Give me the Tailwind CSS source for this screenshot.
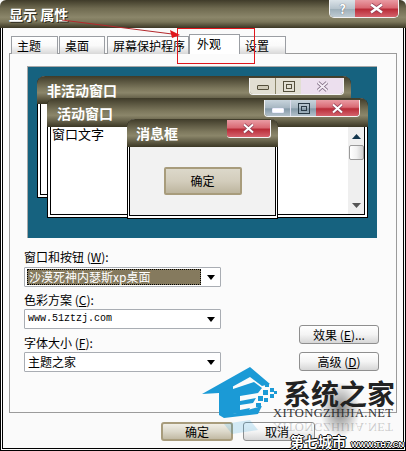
<!DOCTYPE html>
<html lang="zh">
<head>
<meta charset="utf-8">
<script src="https://cdn.jsdelivr.net/npm/@tailwindcss/browser@4"></script>
<title>显示 属性</title>
</head>
<body class="bg-white">
<div class="relative flex h-[451px] w-[406px] flex-col overflow-hidden bg-[#fafafa] font-['Noto_Sans_CJK_SC',sans-serif] text-[12px] leading-[14px] text-black">

  <!-- title bar -->
  <div class="relative flex h-[28px] shrink-0 items-center rounded-t-[6px] bg-[linear-gradient(180deg,#3f3b29_0%,#6f6a50_30%,#8b866a_62%,#7a7559_78%,#3b3725_100%)] pl-[9px]">
    <span class="text-[14px] font-bold text-white [text-shadow:1px_1px_0_#2c2a1c]">显示 属性</span>
    <div class="absolute right-[7px] top-0 flex h-[18px] overflow-hidden rounded-b-[5px] border border-t-0 border-[#f2f2f2]">
      <div class="flex w-[25px] items-center justify-center bg-[linear-gradient(180deg,#dbe3e8,#b7c4cd_50%,#9fb0ba_55%,#bfcbd3)] text-[13px] font-bold leading-[14px] text-white [text-shadow:0_0_1px_#334]">?</div>
      <div class="flex w-[43px] items-center justify-center bg-[linear-gradient(180deg,#e99ba3,#d96a74_45%,#b92c38_55%,#d5636d)]">
        <svg width="15" height="11" viewBox="0 0 15 11"><path d="M2 1.5 13 9.5M13 1.5 2 9.5" stroke="#8f3f55" stroke-width="4"/><path d="M2 1.5 13 9.5M13 1.5 2 9.5" stroke="#fff" stroke-width="2.4"/></svg>
      </div>
    </div>
  </div>

  <!-- window frame and client area -->
  <div class="flex min-h-0 flex-1 flex-col border-[3px] border-t-0 border-double border-black px-[6px] pt-[6px]">
    <!-- tabs -->
    <div class="relative z-10 -mb-px flex h-[20px] shrink-0 items-end pl-[2px]">
      <div class="mr-px flex h-[18px] w-[47px] items-center border border-b-0 border-[#9b9ea3] bg-[linear-gradient(180deg,#fff,#fafafa_50%,#d8d8d8)] pl-[5px]">主题</div>
      <div class="mr-[2px] flex h-[18px] w-[46px] items-center border border-b-0 border-[#9b9ea3] bg-[linear-gradient(180deg,#fff,#fafafa_50%,#d8d8d8)] pl-[5px]">桌面</div>
      <div class="flex h-[18px] w-[82px] items-center border border-b-0 border-[#9b9ea3] bg-[linear-gradient(180deg,#fff,#fafafa_50%,#d8d8d8)] pl-[5px]">屏幕保护程序</div>
      <div class="flex h-[20px] w-[51px] items-start border border-b-0 border-[#9b9ea3] bg-white pl-[7px] pt-[2px]">外观</div>
      <div class="flex h-[18px] w-[46px] items-center border border-b-0 border-l-0 border-[#9b9ea3] bg-[linear-gradient(180deg,#fff,#fafafa_50%,#d8d8d8)] pl-[5px]">设置</div>
    </div>

    <!-- page -->
    <div class="flex h-[360px] shrink-0 flex-col border border-[#9b9b9b] bg-[#fbfbfb] pl-[17px] pt-[12px]">
      <!-- preview canvas -->
      <div class="relative h-[172px] w-[350px] shrink-0 border-l border-t border-[#a8a8a8] bg-[#16627f]">

        <!-- inactive window -->
        <div class="absolute left-[9px] top-[9px] h-[122px] w-[314px] rounded-t-[8px] border border-t-0 border-black bg-white">
          <div class="-mx-px flex h-[28px] items-center rounded-t-[8px] bg-[linear-gradient(180deg,#3f3b29_0%,#7d785d_45%,#8b866a_60%,#3b3725_100%)] pl-[10px] text-[14px] font-bold text-white">非活动窗口</div>
          <div class="ml-[2px] h-[91px] border-b border-l border-black"></div>
          <div class="absolute right-[6px] top-[2px] flex h-[17px] overflow-hidden rounded-b-[4px] border border-t-0 border-[#f4f4f4]">
            <div class="flex w-[26px] items-center justify-center border-r border-[#8b866a] bg-[#e2dfd3]"><span class="mt-[3px] block h-[5px] w-[12px] rounded-[1px] border border-[#55503c] bg-[#cfcab8]"></span></div>
            <div class="flex w-[25px] items-center justify-center bg-[#e2dfd3]"><span class="flex h-[11px] w-[12px] items-center justify-center border border-[#55503c]"><span class="block h-[5px] w-[6px] border border-[#55503c]"></span></span></div>
            <div class="flex w-[42px] items-center justify-center bg-[#ecdfee]">
              <svg width="13" height="11" viewBox="0 0 13 11"><path d="M2 1.5 11 9.5M11 1.5 2 9.5" stroke="#7d6a80" stroke-width="3.6"/><path d="M2 1.5 11 9.5M11 1.5 2 9.5" stroke="#f4ecf5" stroke-width="1.8"/></svg>
            </div>
          </div>
        </div>

        <!-- active window -->
        <div class="absolute left-[19px] top-[31px] h-[120px] w-[321px] rounded-t-[8px] border border-t-0 border-black bg-white">
          <div class="-mx-px flex h-[29px] items-center rounded-t-[8px] bg-[linear-gradient(180deg,#3f3b29_0%,#7d785d_45%,#8b866a_60%,#3b3725_100%)] pl-[10px] text-[14px] font-bold text-white">活动窗口</div>
          <div class="mx-[2px] h-[88px] border-b border-l border-r border-black bg-white pl-px text-[13px] leading-[14px]">窗口文字</div>
          <div class="absolute right-[7px] top-[2px] flex h-[17px] overflow-hidden rounded-b-[4px] border border-t-0 border-[#f4f4f4]">
            <div class="flex w-[26px] items-center justify-center border-r border-[#dde] bg-[linear-gradient(180deg,#c8d4dc,#a6b6c2_50%,#8499a8_55%,#b3c1cb)]"><span class="mt-[4px] block h-[5px] w-[12px] rounded-[1px] border border-[#eef] bg-white"></span></div>
            <div class="flex w-[25px] items-center justify-center bg-[linear-gradient(180deg,#c8d4dc,#a6b6c2_50%,#8499a8_55%,#b3c1cb)]"><span class="flex h-[11px] w-[12px] items-center justify-center border border-[#2a3a46]"><span class="block h-[5px] w-[6px] border border-[#2a3a46]"></span></span></div>
            <div class="flex w-[43px] items-center justify-center bg-[linear-gradient(180deg,#ea9ca4,#d96a74_45%,#b92c38_55%,#d5636d)]">
              <svg width="13" height="11" viewBox="0 0 13 11"><path d="M2 1.5 11 9.5M11 1.5 2 9.5" stroke="#8f3f55" stroke-width="3.6"/><path d="M2 1.5 11 9.5M11 1.5 2 9.5" stroke="#fff" stroke-width="2"/></svg>
            </div>
          </div>
          <!-- scroll bar -->
          <div class="absolute bottom-[3px] right-[3px] top-[29px] flex w-[16px] flex-col items-center bg-[#efefef]">
            <svg class="mt-[7px]" width="9" height="5" viewBox="0 0 9 5"><path d="M4.5 0 9 5H0Z" fill="#12354d"/></svg>
            <div class="mt-[6px] h-[15px] w-[15px] rounded-[2px] border border-[#9a9a9a] bg-[linear-gradient(90deg,#fff,#f1f1f1_50%,#cfcfcf)]"></div>
            <svg class="mb-[6px] mt-auto" width="9" height="5" viewBox="0 0 9 5"><path d="M0 0H9L4.5 5Z" fill="#555"/></svg>
          </div>
        </div>

        <!-- message box -->
        <div class="absolute left-[99px] top-[52px] h-[100px] w-[151px] rounded-t-[8px] border border-t-0 border-black bg-white p-0">
          <div class="-mx-px flex h-[28px] items-center rounded-t-[8px] bg-[linear-gradient(180deg,#3f3b29_0%,#7d785d_45%,#8b866a_60%,#3b3725_100%)] pl-[9px] text-[14px] font-bold text-white">消息框</div>
          <div class="ml-px flex h-[69px] w-[147px] justify-center border-b border-r border-l border-black bg-[#f2f2f2] pt-[20px]">
            <div class="flex h-[28px] w-[78px] items-center justify-center rounded-[2px] border-2 border-[#a89c7c] bg-[linear-gradient(180deg,#dcd8ca,#d3cdbc_50%,#bdb59e)]">确定</div>
          </div>
          <div class="absolute right-[6px] top-[1px] flex h-[18px] w-[44px] items-center justify-center rounded-b-[3px] border-b border-r border-[#f4f4f4] bg-[linear-gradient(180deg,#ea9ca4,#d96a74_45%,#b92c38_55%,#d5636d)]">
            <svg width="13" height="11" viewBox="0 0 13 11"><path d="M2 1.5 11 9.5M11 1.5 2 9.5" stroke="#8f3f55" stroke-width="3.6"/><path d="M2 1.5 11 9.5M11 1.5 2 9.5" stroke="#fff" stroke-width="2"/></svg>
          </div>
        </div>
      </div>

      <!-- form -->
      <div class="-ml-[3px] flex w-[355px] justify-between">
        <div class="w-[197px]">
          <div class="mt-[12px] h-[14px]">窗口和按钮 (<u>W</u>):</div>
          <div class="mt-[3px] flex h-[20px] items-center justify-between rounded-[1px] border border-[#a9adb3] bg-white pl-[2px] pr-[4px]">
            <div class="h-[16px] w-[174px] border border-dotted border-black bg-[#857a5e] pl-px text-[12px] leading-[14px] text-white">沙漠死神内瑟斯xp桌面</div>
            <svg class="mr-[1px]" width="8" height="5" viewBox="0 0 8 5"><path d="M0 0H8L4 5Z" fill="#000"/></svg>
          </div>
          <div class="mt-[6px] h-[14px]">色彩方案 (<u>C</u>):</div>
          <div class="mt-[2px] flex h-[20px] items-center justify-between rounded-[1px] border border-[#a9adb3] bg-white pl-[3px] pr-[4px]">
            <span class="font-['Liberation_Mono',monospace] text-[10px]">www.51ztzj.com</span>
            <svg class="mr-[1px]" width="8" height="5" viewBox="0 0 8 5"><path d="M0 0H8L4 5Z" fill="#000"/></svg>
          </div>
          <div class="mt-[7px] h-[14px]">字体大小 (<u>F</u>):</div>
          <div class="mt-[2px] flex h-[20px] items-center justify-between rounded-[1px] border border-[#a9adb3] bg-white pl-[3px] pr-[4px]">
            <span>主题之家</span>
            <svg class="mr-[1px]" width="8" height="5" viewBox="0 0 8 5"><path d="M0 0H8L4 5Z" fill="#000"/></svg>
          </div>
        </div>
        <div class="flex flex-col justify-end gap-[8px] pb-px">
          <div class="flex h-[19px] w-[80px] items-center justify-center rounded-[3px] border border-[#8f8f8f] bg-[linear-gradient(180deg,#fff,#f4f4f4_50%,#d6d6d6)]">效果 (<u>E</u>)...</div>
          <div class="flex h-[19px] w-[80px] items-center justify-center rounded-[3px] border border-[#8f8f8f] bg-[linear-gradient(180deg,#fff,#f4f4f4_50%,#d6d6d6)]">高级 (<u>D</u>)</div>
        </div>
      </div>
    </div>

    <!-- dialog buttons -->
    <div class="mt-[9px] flex gap-[10px] pl-[152px]">
      <div class="flex h-[19px] w-[72px] items-center justify-center rounded-[3px] border-2 border-[#a89c7c] bg-[linear-gradient(180deg,#f0eee6,#dcd8ca_50%,#c2baa4)]">确定</div>
      <div class="flex h-[19px] w-[72px] items-center justify-center rounded-[3px] border border-[#8f8f8f] bg-[linear-gradient(180deg,#fff,#f4f4f4_50%,#d6d6d6)] pr-[4px]">取消</div>
    </div>
  </div>

  <!-- red annotation -->
  <svg class="pointer-events-none absolute left-0 top-0 z-20" width="406" height="451" viewBox="0 0 406 451">
    <path d="M62 20 172 34" stroke="#b4282c" stroke-width="1"/>
    <path d="M180 35 170 30 172 38Z" fill="#e0161c"/>
    <rect x="177.500" y="28.500" width="77" height="35" fill="none" stroke="#e0161c"/>
  </svg>

  <!-- site watermark -->
  <div class="pointer-events-none absolute left-[320px] top-[382px] z-20 h-[55px] w-[40px] bg-[radial-gradient(closest-side,#0000007a,#0000004a_40%,#00000000)]"></div>
  <svg class="pointer-events-none absolute left-0 top-0 z-20" width="406" height="451" viewBox="0 0 406 451">
    <path d="M202 394 250 367 270 384 262 386 250 377 232 387 219 393Z" fill="#1b9ad6"/>
    <path d="M219 391 233 386V414L262 406 258 414 224 418 219 415Z" fill="#1b9ad6"/>
    <path d="M233 389 254 382 262 388 258 393 240 396 240 401 256 398 253 403 240 405 240 410 250 408 248 412 233 414Z" fill="#1b9ad6"/>
    <g fill="#1b9ad6">
      <rect x="265" y="383" width="4" height="4"/><rect x="270" y="388" width="4" height="4"/>
      <rect x="263" y="390" width="5" height="5"/><rect x="270" y="394" width="4" height="4"/>
      <rect x="258" y="396" width="5" height="5"/><rect x="264" y="398" width="4" height="4"/>
      <rect x="256" y="403" width="5" height="4"/><rect x="274" y="391" width="3" height="3"/>
    </g>
    <path d="M224 424 250 420 258 430 232 434Z" fill="#1b9ad6" opacity=".18"/>
  </svg>
  <div class="pointer-events-none absolute left-[283px] top-[378px] z-20 whitespace-nowrap text-[28px] font-bold leading-[30px] text-[#222]">系统之家</div>
  <div class="pointer-events-none absolute left-[273px] top-[407px] z-20 whitespace-nowrap font-['Liberation_Serif',serif] text-[12.5px] leading-[13px] tracking-[0.4px] text-[#333]">XITONGZHIJIA.NET</div>
  <div class="pointer-events-none absolute left-[273px] top-[420px] z-20 -scale-y-100 whitespace-nowrap font-['Liberation_Serif',serif] text-[12.5px] leading-[13px] tracking-[0.4px] text-[#333]/25">XITONGZHIJIA.NET</div>
  <div class="pointer-events-none absolute left-[290px] top-[434px] z-30 whitespace-nowrap text-[14px] font-bold leading-[15px] text-white [text-shadow:1px_0_0_#000,-1px_0_0_#000,0_1px_0_#000,0_-1px_0_#000]">第七城市</div>
  <div class="pointer-events-none absolute left-[351px] top-[440px] z-30 whitespace-nowrap font-['Liberation_Sans',sans-serif] text-[8px] font-bold leading-[9px] text-white [text-shadow:1px_0_0_#000,-1px_0_0_#000,0_1px_0_#000,0_-1px_0_#000]">WWW.TH7.CN</div>
</div>
</body>
</html>
